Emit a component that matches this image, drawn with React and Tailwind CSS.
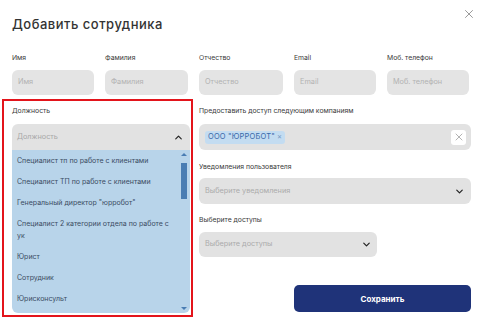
import { X, ChevronUp, ChevronDown } from 'lucide-react';

const topFields = ['Имя', 'Фамилия', 'Отчество', 'Email', 'Моб. телефон'];

const positions = [
  'Специалист тп по работе с клиентами',
  'Специалист ТП по работе с клиентами',
  'Генеральный директор "юрробот"',
  'Специалист 2 категории отдела по работе с ук',
  'Юрист',
  'Сотрудник',
  'Юрисконсульт',
];

function Label({ children, className = '' }) {
  return <div className={`text-[6.8px] leading-[10px] text-[#3a3a3a] ${className}`}>{children}</div>;
}

export default function AddEmployee() {
  return (
    <div className="relative w-[485px] h-[324px] bg-white overflow-hidden font-['Inter',sans-serif] text-[#333]">
      <button className="absolute top-[7px] right-[9px] text-[#7a7a7a]">
        <X size={14} strokeWidth={1.3} />
      </button>

      <h1 className="ml-[12px] pt-[14px] text-[13px] leading-[20px] font-medium tracking-[0.5px] text-[#333]">Добавить сотрудника</h1>

      <div className="ml-[12px] mt-[19px] grid grid-cols-[82px_83px_84px_82px_82px] gap-x-[11px] w-[459px]">
        {topFields.map(f => (
          <div key={f}>
            <Label className="mb-[7px]">{f}</Label>
            <div className="h-[25px] rounded-[6px] bg-[#e4e4e4] flex items-center px-[6px] text-[7.3px] text-[#b2b2b2]">{f}</div>
          </div>
        ))}
      </div>

      <div className="flex mt-[4px]">
        {/* Должность, open select */}
        <div className="ml-[2px] w-[191px] h-[218px] border-2 border-[#e3141b] pl-[8px] pr-[1px] pt-[5px]">
          <Label className="mb-[8px]">Должность</Label>
          <div className="h-[26px] rounded-t-[6px] bg-[#e2e2e2] flex items-center justify-between pl-[5px] pr-[6px] text-[7.3px] text-[#a8a8a8]">
            <span>Должность</span>
            <ChevronUp size={11} strokeWidth={2.6} className="text-[#222]" />
          </div>
          <div className="h-[163px] rounded-b-[6px] bg-[#b8d4ea] flex overflow-hidden">
            <div className="flex-1 pl-[5px] pr-[6px] text-[7px] leading-[12px] text-[#3b4c63]">
              {positions.map(p => (
                <div key={p} className="py-[4.5px]">{p}</div>
              ))}
            </div>
            <div className="w-[9px] mr-[2px] flex flex-col items-center pt-[3px] pb-[3px]">
              <div className="w-0 h-0 border-l-[3px] border-r-[3px] border-b-[3px] border-l-transparent border-r-transparent border-b-[#4a7db3]" />
              <div className="mt-[7px] w-[6px] h-[36px] bg-[#4a7db3]" />
              <div className="flex-1" />
              <div className="w-0 h-0 border-l-[3px] border-r-[3px] border-t-[3px] border-l-transparent border-r-transparent border-t-[#4a7db3]" />
            </div>
          </div>
        </div>

        {/* right column */}
        <div className="ml-[6px] w-[272px] pt-[7px] flex flex-col">
          <Label className="mb-[8px]">Предоставить доступ следующим компаниям</Label>
          <div className="h-[26px] rounded-[6px] bg-[#e2e2e2] flex items-center justify-between pl-[6px] pr-[5px]">
            <span className="rounded-[3px] bg-[#c3dcf1] px-[3px] h-[13px] flex items-center text-[7.5px] text-[#3868a8] tracking-[0.2px]">
              ООО "ЮРРОБОТ" <span className="ml-[2px] text-[#7a9cc6]">×</span>
            </span>
            <span className="w-[15px] h-[15px] rounded-[3px] bg-white flex items-center justify-center text-[#8a8a8a]">
              <X size={12} strokeWidth={1.3} />
            </span>
          </div>

          <Label className="mt-[12px] mb-[6px]">Уведомления пользователя</Label>
          <div className="h-[26px] rounded-[6px] bg-[#e2e2e2] flex items-center justify-between pl-[6px] pr-[6px] text-[7.3px] text-[#ababab]">
            <span>Выберите уведомления</span>
            <ChevronDown size={11} strokeWidth={2.6} className="text-[#222]" />
          </div>

          <Label className="mt-[11px] mb-[7px]">Выберите доступы</Label>
          <div className="w-[178px] h-[25px] rounded-[6px] bg-[#e2e2e2] flex items-center justify-between pl-[6px] pr-[5px] text-[7.3px] text-[#ababab]">
            <span>Выберите доступы</span>
            <ChevronDown size={11} strokeWidth={2.6} className="text-[#222]" />
          </div>

          <button className="mt-[28px] self-end w-[177px] h-[27px] rounded-[5px] bg-[#1f3379] text-white text-[8px] font-bold">Сохранить</button>
        </div>
      </div>
    </div>
  );
}
